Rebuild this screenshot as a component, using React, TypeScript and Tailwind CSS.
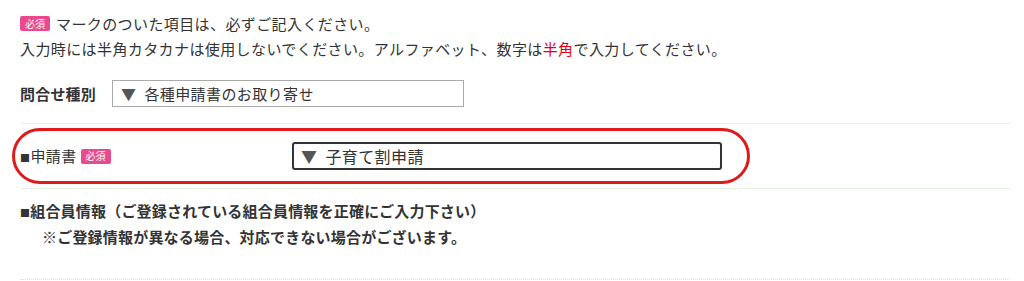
const Required = () => (
  <span className="inline-flex h-[15px] w-[30px] items-center justify-center rounded-[2px] bg-[#e8498f] text-[10px] leading-none tracking-normal text-white">
    必須
  </span>
);

export default function App() {
  return (
    <div className="h-[281px] w-[1024px] overflow-hidden bg-white pl-[20px] pr-[14px] pt-[11px] font-['Noto_Sans_CJK_JP',sans-serif] text-[15px] leading-[25px] tracking-[0.4px] text-[#333]">
      <div className="flex items-center gap-[6px]">
        <Required />
        <span>マークのついた項目は、必ずご記入ください。</span>
      </div>
      <p>
        入力時には半角カタカナは使用しないでください。アルファベット、数字は
        <span className="text-[#e60012]">半角</span>で入力してください。
      </p>

      <div className="mt-[19px] flex items-center">
        <span className="w-[92px] font-bold tracking-[0.2px]">問合せ種別</span>
        <div className="flex h-[27px] w-[352px] items-center gap-[8px] border border-[#aaa] px-[8px]">
          <span className="text-[#555]">▼</span>
          <span>各種申請書のお取り寄せ</span>
        </div>
      </div>

      <div className="mt-[16px] border-t border-[#e2f1e2] pt-[4px]">
        <div className="ml-[-8px] flex h-[56px] w-[738px] items-center rounded-full border-[3px] border-[#e01a1a] pl-[5px]">
          <div className="flex w-[272px] items-center gap-[4px]">
            <span>
              <span className="text-[10px]">■</span>申請書
            </span>
            <Required />
          </div>
          <div className="flex h-[28px] w-[430px] items-center gap-[8px] rounded-[3px] border-2 border-[#333] px-[7px] text-[16px]">
            <span className="text-[#555]">▼</span>
            <span>子育て割申請</span>
          </div>
        </div>
      </div>

      <div className="mt-[4px] border-t border-[#e2f1e2] pt-[10px] font-bold leading-[24px] tracking-[0.2px]">
        <p>
          <span className="text-[10px]">■</span>組合員情報（ご登録されている組合員情報を正確にご入力下さい）
        </p>
        <p className="pl-[22px]">※ご登録情報が異なる場合、対応できない場合がございます。</p>
      </div>

      <div className="mt-[30px] border-t border-dotted border-[#ddd]" />
    </div>
  );
}
